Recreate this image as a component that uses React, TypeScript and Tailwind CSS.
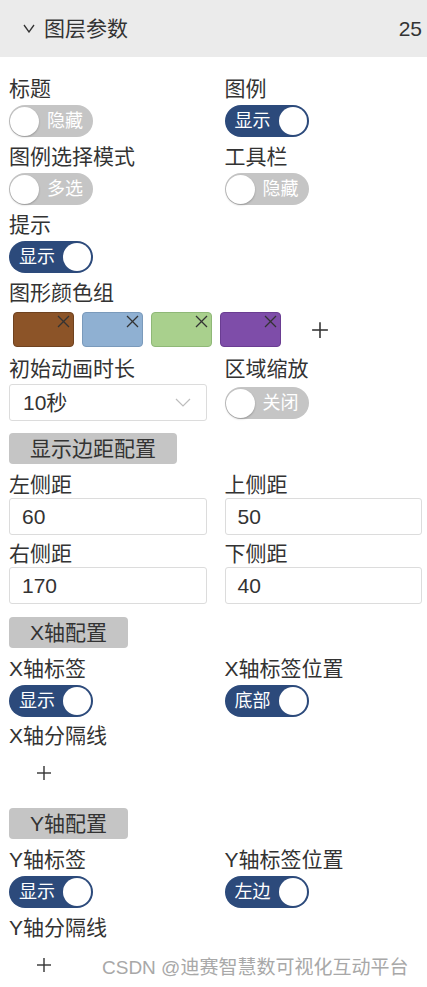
import React from "react";

const font = { fontFamily: '"Liberation Sans", "Noto Sans CJK SC", sans-serif' };

type ToggleProps = { on: boolean; text: string };

const Toggle: React.FC<ToggleProps> = ({ on, text }) => {
  if (on) {
    return (
      <div className="flex items-center w-[84px] h-[32px] rounded-full bg-[#2c4a7b] pl-[10px] pr-[2px]">
        <span className="text-[18px] leading-none text-white">{text}</span>
        <span className="ml-auto w-[28px] h-[28px] rounded-full bg-white"></span>
      </div>
    );
  }
  return (
    <div className="flex items-center w-[84px] h-[32px] rounded-full bg-[#c5c5c5] pl-[1px] pr-[10px]">
      <span className="w-[29px] h-[29px] rounded-full bg-white shadow-[0_1px_2px_rgba(0,0,0,0.25)]"></span>
      <span className="ml-auto text-[18px] leading-none text-white">{text}</span>
    </div>
  );
};

const Label: React.FC<{ children: React.ReactNode }> = ({ children }) => (
  <div className="h-[28px] flex items-center text-[21px] leading-none text-[#333]">{children}</div>
);

const ToggleField: React.FC<{ label: string; on: boolean; text: string }> = ({ label, on, text }) => (
  <div>
    <Label>{label}</Label>
    <div className="mt-[3px]">
      <Toggle on={on} text={text} />
    </div>
  </div>
);

const PlusIcon: React.FC<{ size: number }> = ({ size }) => (
  <svg width={size} height={size} viewBox="0 0 16 16" fill="none" stroke="#333" strokeWidth="1.4">
    <line x1="8" y1="1" x2="8" y2="15" />
    <line x1="1" y1="8" x2="15" y2="8" />
  </svg>
);

const Swatch: React.FC<{ color: string; border: string }> = ({ color, border }) => (
  <div className={`relative w-[61px] h-[35px] rounded-[4px] border ${color} ${border}`}>
    <svg className="absolute right-[3px] top-[2px]" width="13" height="13" viewBox="0 0 13 13" stroke="#333" strokeWidth="1.2">
      <line x1="1" y1="1" x2="12" y2="12" />
      <line x1="12" y1="1" x2="1" y2="12" />
    </svg>
  </div>
);

const NumberInput: React.FC<{ value: string }> = ({ value }) => (
  <div className="h-[37px] w-full flex items-center rounded-[3px] border border-[#dcdcdc] pl-[12px] text-[21px] text-[#333] bg-white">
    {value}
  </div>
);

const SectionButton: React.FC<{ label: string; w: string }> = ({ label, w }) => (
  <div className={`h-[31px] ${w} flex items-center justify-center rounded-[4px] bg-[#c5c5c5] text-[21px] leading-none text-[#333]`}>
    {label}
  </div>
);

const App: React.FC = () => {
  return (
    <div className="relative w-[427px] h-[987px] bg-white overflow-hidden" style={font}>
      <div className="h-[57px] bg-[#ebebeb] flex items-center pl-[23px] pr-[5px] text-[#333]">
        <svg width="12" height="9" viewBox="0 0 12 9" fill="none" stroke="#333" strokeWidth="1.3">
          <polyline points="1,1 6,8 11,1" />
        </svg>
        <span className="ml-[9px] text-[21px] leading-none">图层参数</span>
        <span className="ml-auto text-[21px] leading-none">25</span>
      </div>

      <div className="pl-[9px] pr-[5px] pt-[17px]">
        <div className="grid grid-cols-2 gap-x-[18px]">
          <div className="pb-[5px]">
            <ToggleField label="标题" on={false} text="隐藏" />
          </div>
          <div className="pb-[5px]">
            <ToggleField label="图例" on={true} text="显示" />
          </div>
          <div className="pb-[5px]">
            <ToggleField label="图例选择模式" on={false} text="多选" />
          </div>
          <div className="pb-[5px]">
            <ToggleField label="工具栏" on={false} text="隐藏" />
          </div>
          <div className="pb-[5px]">
            <ToggleField label="提示" on={true} text="显示" />
          </div>
        </div>

        <Label>图形颜色组</Label>
        <div className="mt-[6px] ml-[4px] flex items-center gap-[8px]">
          <Swatch color="bg-[#8c5428]" border="border-[#6f421f]" />
          <Swatch color="bg-[#8fb0d2]" border="border-[#7a9abb]" />
          <Swatch color="bg-[#a9d08d]" border="border-[#8fb877]" />
          <Swatch color="bg-[#7e4da9]" border="border-[#6a3d92]" />
          <div className="ml-[22px]">
            <PlusIcon size={18} />
          </div>
        </div>

        <div className="mt-[7px] grid grid-cols-2 gap-x-[18px]">
          <div>
            <Label>初始动画时长</Label>
            <div className="mt-[2px] h-[37px] flex items-center rounded-[3px] border border-[#dcdcdc] pl-[13px] pr-[15px] text-[21px] text-[#333]">
              <span>10秒</span>
              <svg className="ml-auto" width="16" height="9" viewBox="0 0 16 9" fill="none" stroke="#bdbdbd" strokeWidth="1.2">
                <polyline points="1,1 8,8 15,1" />
              </svg>
            </div>
          </div>
          <div>
            <Label>区域缩放</Label>
            <div className="mt-[5px]">
              <Toggle on={false} text="关闭" />
            </div>
          </div>
        </div>

        <div className="mt-[12px]">
          <SectionButton label="显示边距配置" w="w-[168px]" />
        </div>

        <div className="mt-[6px] grid grid-cols-2 gap-x-[18px]">
          <div>
            <Label>左侧距</Label>
            <NumberInput value="60" />
          </div>
          <div>
            <Label>上侧距</Label>
            <NumberInput value="50" />
          </div>
          <div className="mt-[4px]">
            <Label>右侧距</Label>
            <NumberInput value="170" />
          </div>
          <div className="mt-[4px]">
            <Label>下侧距</Label>
            <NumberInput value="40" />
          </div>
        </div>

        <div className="mt-[13px]">
          <SectionButton label="X轴配置" w="w-[119px]" />
        </div>
        <div className="mt-[6px] grid grid-cols-2 gap-x-[18px]">
          <ToggleField label="X轴标签" on={true} text="显示" />
          <ToggleField label="X轴标签位置" on={true} text="底部" />
        </div>
        <div className="mt-[4px]">
          <Label>X轴分隔线</Label>
        </div>
        <div className="h-[48px] flex items-center pl-[27px]">
          <PlusIcon size={16} />
        </div>

        <div className="mt-[11px]">
          <SectionButton label="Y轴配置" w="w-[119px]" />
        </div>
        <div className="mt-[6px] grid grid-cols-2 gap-x-[18px]">
          <ToggleField label="Y轴标签" on={true} text="显示" />
          <ToggleField label="Y轴标签位置" on={true} text="左边" />
        </div>
        <div className="mt-[5px]">
          <Label>Y轴分隔线</Label>
        </div>
        <div className="h-[48px] flex items-center pl-[27px]">
          <PlusIcon size={16} />
        </div>
      </div>

      <div className="absolute left-[102px] top-[956px] text-[19px] leading-[24px] text-[#a8a8a8] [text-shadow:0_0_1px_#fff]">
        CSDN @迪赛智慧数可视化互动平台
      </div>
    </div>
  );
};

export default App;
